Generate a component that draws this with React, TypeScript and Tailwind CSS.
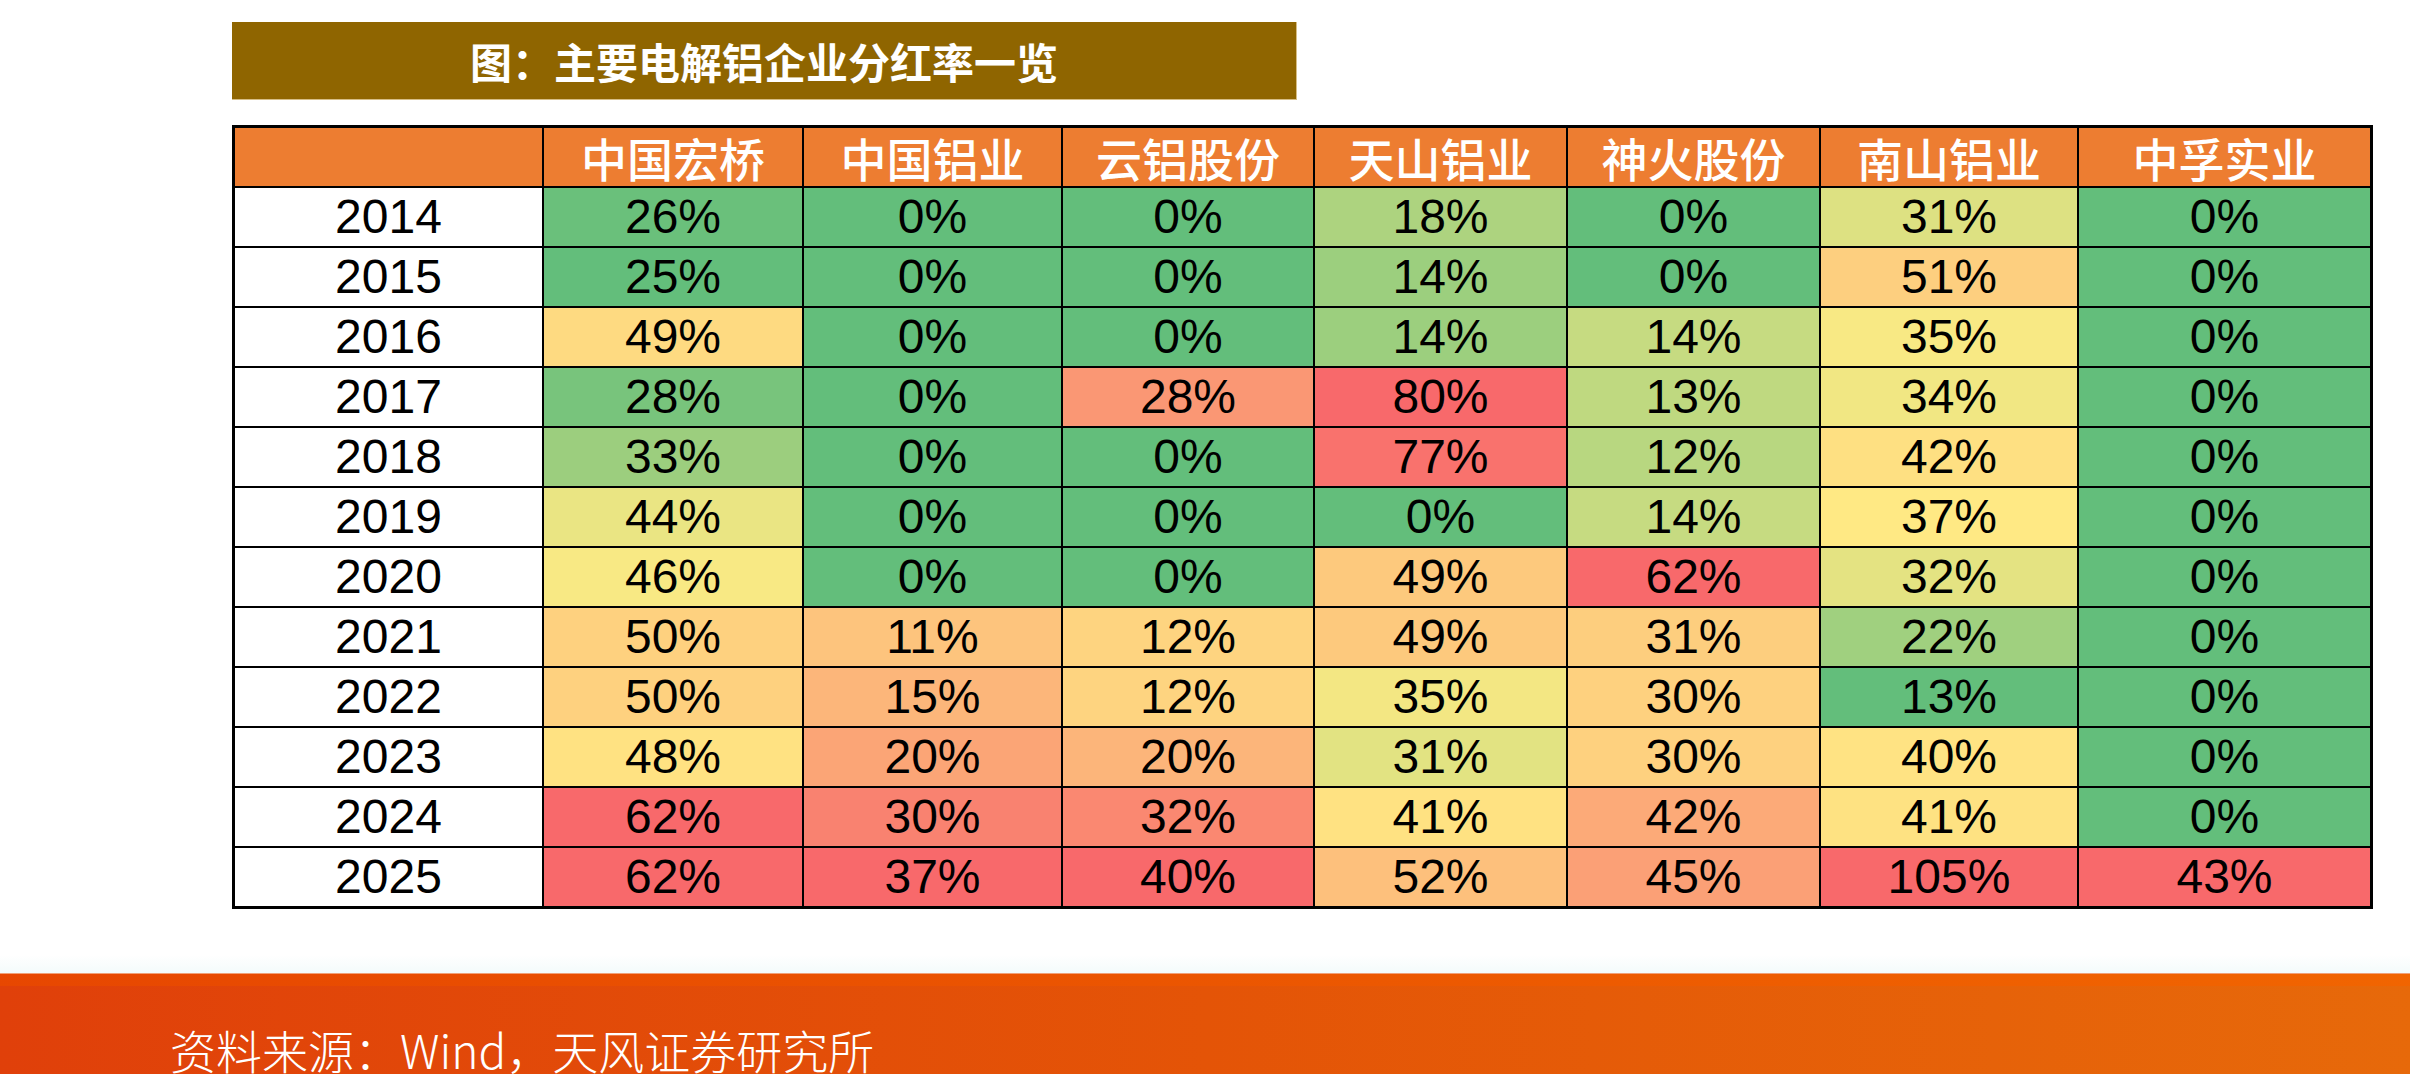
import React from "react";

const companies = ["中国宏桥", "中国铝业", "云铝股份", "天山铝业", "神火股份", "南山铝业", "中孚实业"];
const years = [2014, 2015, 2016, 2017, 2018, 2019, 2020, 2021, 2022, 2023, 2024, 2025];
const data: number[][] = [
  [26, 25, 49, 28, 33, 44, 46, 50, 50, 48, 62, 62],
  [0, 0, 0, 0, 0, 0, 0, 11, 15, 20, 30, 37],
  [0, 0, 0, 28, 0, 0, 0, 12, 12, 20, 32, 40],
  [18, 14, 14, 80, 77, 0, 49, 49, 35, 31, 41, 52],
  [0, 0, 14, 13, 12, 14, 62, 31, 30, 30, 42, 45],
  [31, 51, 35, 34, 42, 37, 32, 22, 13, 40, 41, 105],
  [0, 0, 0, 0, 0, 0, 0, 0, 0, 0, 0, 43],
];

const GREEN = [99, 190, 123];
const YELLOW = [255, 235, 132];
const RED = [248, 105, 107];

function percentile(sorted: number[], p: number) {
  const r = p * (sorted.length - 1);
  const lo = Math.floor(r);
  const hi = Math.ceil(r);
  return sorted[lo] + (sorted[hi] - sorted[lo]) * (r - lo);
}

function mix(a: number[], b: number[], t: number) {
  const c = a.map((v, i) => Math.round(v + (b[i] - v) * t));
  return `rgb(${c[0]},${c[1]},${c[2]})`;
}

function scaleColor(v: number, col: number[]) {
  const sorted = [...col].sort((x, y) => x - y);
  const min = sorted[0];
  const max = sorted[sorted.length - 1];
  const mid = percentile(sorted, 0.5);
  if (v <= min) return mix(GREEN, GREEN, 0);
  if (v >= max) return mix(RED, RED, 0);
  if (v <= mid) return mix(GREEN, YELLOW, (v - min) / (mid - min));
  return mix(YELLOW, RED, (v - mid) / (max - mid));
}

export default function App() {
  return (
    <div className="w-[2410px] h-[1074px] bg-white overflow-hidden flex flex-col">
      <div className="pt-[22px] pl-[232px]">
        <div
          className="w-[1065px] h-[78px] bg-[#8F6500] border-r border-b border-[#D6BE86] flex items-center justify-center text-white text-[42px] font-semibold leading-none"
          style={{ fontFamily: '"Noto Sans CJK SC", sans-serif' }}
        >
          图：主要电解铝企业分红率一览
        </div>
      </div>

      <div className="mt-[25px] ml-[232px]">
        <div className="w-[2141px] grid grid-cols-[307px_258px_257px_250px_251px_251px_256px_291px] grid-rows-[58px_repeat(12,58px)] gap-[2px] bg-black border-[3px] border-black">
          <div className="bg-[#ED7D31]" />
          {companies.map((c) => (
            <div
              key={c}
              className="bg-[#ED7D31] flex items-center justify-center text-white text-[46px] font-medium leading-none"
              style={{ fontFamily: '"Noto Sans CJK SC", sans-serif' }}
            >
              {c}
            </div>
          ))}
          {years.map((y, ri) => (
            <React.Fragment key={y}>
              <div
                className="bg-white flex items-center justify-center text-black text-[48px] leading-none"
                style={{ fontFamily: '"Liberation Sans", Arial, sans-serif' }}
              >
                {y}
              </div>
              {data.map((col, ci) => (
                <div
                  key={ci}
                  className="flex items-center justify-center text-black text-[48px] leading-none"
                  style={{
                    backgroundColor: scaleColor(col[ri], col),
                    fontFamily: '"Liberation Sans", Arial, sans-serif',
                  }}
                >
                  {col[ri]}%
                </div>
              ))}
            </React.Fragment>
          ))}
        </div>
      </div>

      <div className="mt-[46px] h-[18px] bg-gradient-to-b from-white to-[#F4FBFB]" />
      <div className="flex-1 flex flex-col bg-gradient-to-r from-[#E0400A] via-[#E45407] to-[#E7690A]">
        <div className="h-[1px] bg-[#F0A078]" />
        <div className="h-[12px] bg-gradient-to-r from-[#E84800] via-[#EC5600] to-[#F26400] opacity-90" />
        <div
          className="pl-[170px] pt-[40px] text-white text-[46px] font-light leading-none whitespace-nowrap"
          style={{ fontFamily: '"Noto Sans CJK SC", sans-serif' }}
        >
          资料来源：Wind，天风证券研究所
        </div>
      </div>
    </div>
  );
}
